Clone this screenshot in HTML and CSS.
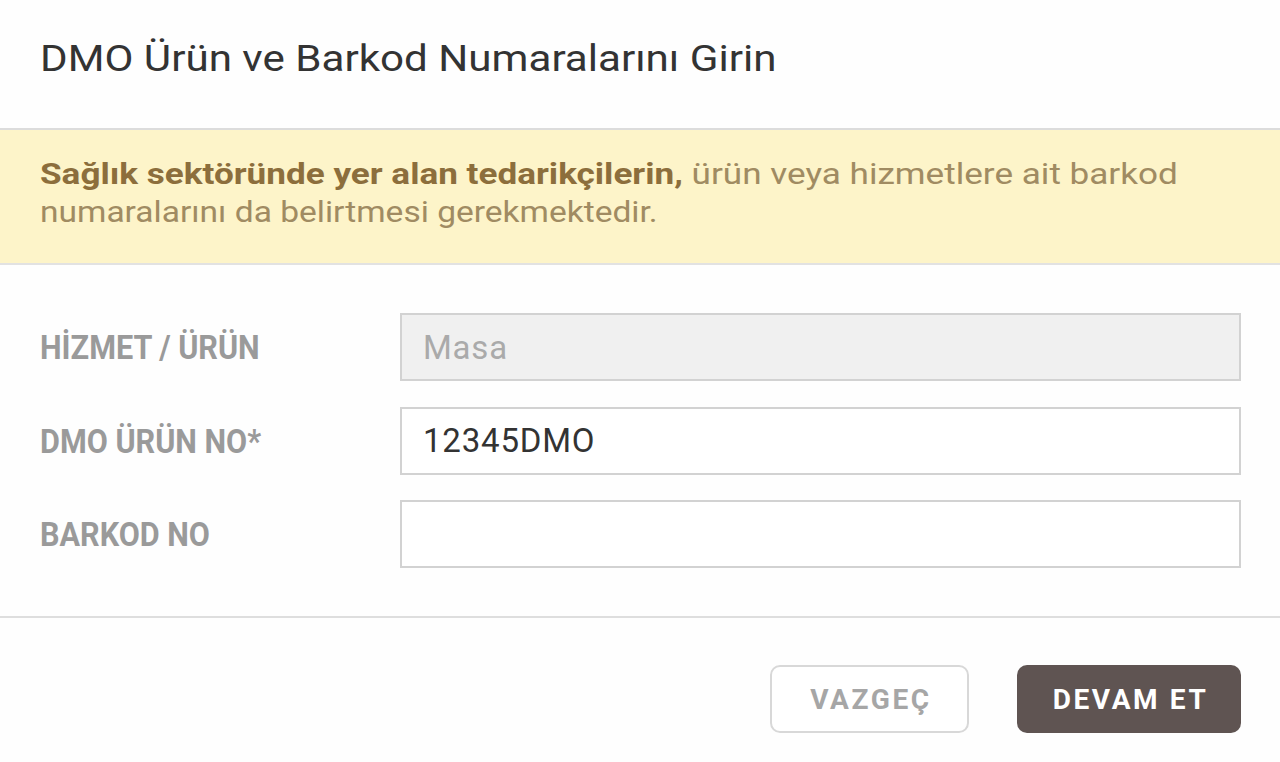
FILE: index.html
```html
<!DOCTYPE html>
<html lang="tr">
<head>
<meta charset="utf-8">
<link rel="stylesheet" href="styles.css">
</head>
<body>
<div class="modal">
  <div class="modal-header">
    <h1 class="title"><span class="stretch">DMO Ürün ve Barkod Numaralarını Girin</span></h1>
  </div>
  <div class="alert">
    <p class="alert-text"><strong>Sağlık sektöründe yer alan tedarikçilerin,</strong> <span>ürün veya hizmetlere ait barkod</span><br><span class="line2">numaralarını da belirtmesi gerekmektedir.</span></p>
  </div>
  <form class="form">
    <div class="row">
      <label class="label"><span>HİZMET / ÜRÜN</span></label>
      <input class="input" type="text" value="Masa" disabled>
    </div>
    <div class="row">
      <label class="label"><span>DMO ÜRÜN NO*</span></label>
      <input class="input" type="text" value="12345DMO">
    </div>
    <div class="row">
      <label class="label"><span>BARKOD NO</span></label>
      <input class="input" type="text" value="">
    </div>
  </form>
  <div class="footer">
    <button class="btn btn-cancel" type="button">VAZGEÇ</button>
    <button class="btn btn-primary" type="button">DEVAM ET</button>
  </div>
</div>
</body>
</html>
```

FILE: styles.css
```css
* { box-sizing: border-box; }
html, body {
  margin: 0;
  padding: 0;
  background: #fefefe;
  font-family: Roboto, "Liberation Sans", sans-serif;
}
.modal {
  width: 1280px;
  height: 762px;
  display: flex;
  flex-direction: column;
}
.modal-header {
  height: 128px;
  padding: 36px 40px 0;
}
.title {
  margin: 0;
  font-size: 36px;
  font-weight: 400;
  color: #333;
  line-height: 46px;
}
.stretch {
  display: inline-block;
  white-space: nowrap;
  transform: scaleX(1.17);
  transform-origin: left center;
}
.alert {
  background: #fdf4c9;
  border-top: 2px solid #dcdcdc;
  border-bottom: 2px solid #e2e2e2;
  padding: 25px 40px 0;
  height: 137px;
}
.alert-text {
  margin: 0;
  width: 1010px;
  font-size: 30px;
  line-height: 38px;
  color: #a08b62;
  white-space: nowrap;
  transform: scaleX(1.17);
  transform-origin: left top;
}
.alert-text strong {
  color: #8c6e3c;
  font-weight: 700;
}
.alert-text .line2 {
  display: inline-block;
  transform: scaleX(0.955);
  transform-origin: left center;
}
.form {
  padding: 48px 39px 0 40px;
  display: flex;
  flex-direction: column;
  gap: 25.5px;
  height: 353px;
  border-bottom: 2px solid #dedede;
}
.row {
  display: flex;
  align-items: center;
}
.label {
  width: 360px;
  flex: none;
  font-size: 34px;
  font-weight: 700;
  color: #9a9a9a;
}
.label span {
  display: inline-block;
  transform: scaleX(0.9);
  transform-origin: left center;
  white-space: nowrap;
}
.input {
  flex: 1;
  height: 68px;
  border: 2px solid #d2d2d2;
  background: #fff;
  padding: 0 21px;
  font-family: Roboto, "Liberation Sans", sans-serif;
  font-size: 33px;
  letter-spacing: 0.8px;
  color: #333;
  outline: none;
}
.input:disabled {
  background: #f0f0f0;
  color: #aaa;
}
.footer {
  display: flex;
  justify-content: flex-end;
  gap: 48px;
  padding: 47px 39px 0 40px;
}
.btn {
  height: 68px;
  border-radius: 10px;
  font-family: Roboto, "Liberation Sans", sans-serif;
  font-size: 28px;
  font-weight: 700;
  letter-spacing: 2.6px;
  padding: 0 0 0 3px;
  cursor: pointer;
}
.btn-cancel {
  width: 199px;
  background: #fff;
  border: 2px solid #d8d8d8;
  color: #a6a6a6;
}
.btn-primary {
  width: 224px;
  background: #5f5452;
  border: none;
  color: #fff;
}
```
